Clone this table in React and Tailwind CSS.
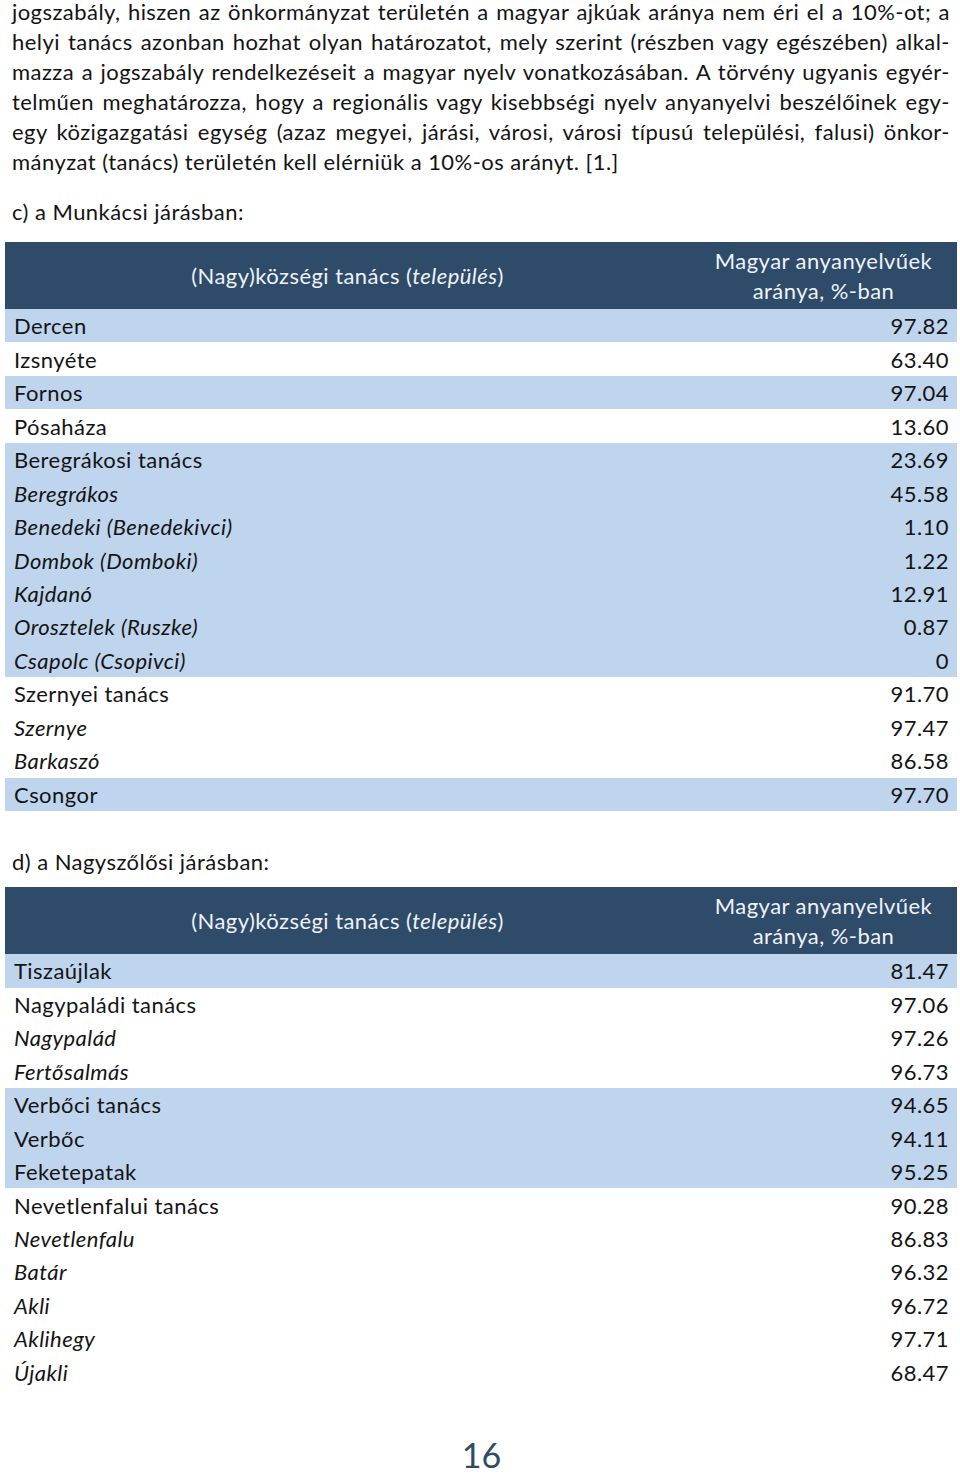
import React from "react";

const para = [
  "jogszabály, hiszen az önkormányzat területén a magyar ajkúak aránya nem éri el a 10%-ot; a",
  "helyi tanács azonban hozhat olyan határozatot, mely szerint (részben vagy egészében) alkal-",
  "mazza a jogszabály rendelkezéseit a magyar nyelv vonatkozásában. A törvény ugyanis egyér-",
  "telműen meghatározza, hogy a regionális vagy kisebbségi nyelv anyanyelvi beszélőinek egy-",
  "egy közigazgatási egység (azaz megyei, járási, városi, városi típusú települési, falusi) önkor-",
];
const lastLine = "mányzat (tanács) területén kell elérniük a 10%-os arányt. [1.]";

const t1 = [
  ["Dercen", "97.82", true, false],
  ["Izsnyéte", "63.40", false, false],
  ["Fornos", "97.04", true, false],
  ["Pósaháza", "13.60", false, false],
  ["Beregrákosi tanács", "23.69", true, false],
  ["Beregrákos", "45.58", true, true],
  ["Benedeki (Benedekivci)", "1.10", true, true],
  ["Dombok (Domboki)", "1.22", true, true],
  ["Kajdanó", "12.91", true, true],
  ["Orosztelek (Ruszke)", "0.87", true, true],
  ["Csapolc (Csopivci)", "0", true, true],
  ["Szernyei tanács", "91.70", false, false],
  ["Szernye", "97.47", false, true],
  ["Barkaszó", "86.58", false, true],
  ["Csongor", "97.70", true, false],
];

const t2 = [
  ["Tiszaújlak", "81.47", true, false],
  ["Nagypaládi tanács", "97.06", false, false],
  ["Nagypalád", "97.26", false, true],
  ["Fertősalmás", "96.73", false, true],
  ["Verbőci tanács", "94.65", true, false],
  ["Verbőc", "94.11", true, false],
  ["Feketepatak", "95.25", true, false],
  ["Nevetlenfalui tanács", "90.28", false, false],
  ["Nevetlenfalu", "86.83", false, true],
  ["Batár", "96.32", false, true],
  ["Akli", "96.72", false, true],
  ["Aklihegy", "97.71", false, true],
  ["Újakli", "68.47", false, true],
];

function Table({ rows }) {
  return (
    <div className="mx-[5px] w-[952px]">
      <div className="grid grid-cols-[685px_1fr] h-[67px] bg-[#2e4b69] text-[#eef2f7]">
        <div className="flex items-center justify-center leading-[30px]">
          <span>
            (Nagy)községi tanács (<span className="italic">település</span>)
          </span>
        </div>
        <div className="flex flex-col items-center justify-center leading-[30px] text-center">
          <span>Magyar anyanyelvűek</span>
          <span>aránya, %-ban</span>
        </div>
      </div>
      {rows.map(([name, val, blue, it]) => (
        <div
          key={name}
          className={
            "flex h-[33.47px] items-center justify-between pl-[9px] pr-[8px] " +
            (blue ? "bg-[#bfd5ee]" : "bg-white")
          }
        >
          <span className={it ? "italic" : ""}>{name}</span>
          <span>{val}</span>
        </div>
      ))}
    </div>
  );
}

export default function App() {
  return (
    <div
      className="w-[960px] h-[1475px] bg-white text-[#141414] text-[22px] tracking-[0.45px] overflow-hidden"
      style={{ fontFamily: "Lato, 'Liberation Sans', sans-serif" }}
    >
      <div className="pl-[12px] pr-[10px] leading-[30px]">
        {para.map((l, i) => (
          <div
            key={l}
            className={
              "text-justify [text-align-last:justify] " +
              (i === 0 ? "leading-[24px] mb-[3px]" : "")
            }
          >
            {l}
          </div>
        ))}
        <div>{lastLine}</div>
      </div>
      <div className="mt-[20px] pl-[12px] leading-[30px]">c) a Munkácsi járásban:</div>
      <div className="mt-[15px]">
        <Table rows={t1} />
      </div>
      <div className="mt-[36px] pl-[12px] leading-[30px]">d) a Nagyszőlősi járásban:</div>
      <div className="mt-[10px]">
        <Table rows={t2} />
      </div>
      <div className="mt-[49px] text-center text-[34px] leading-[34px] tracking-normal text-[#2e4b69] pl-[3px]">16</div>
    </div>
  );
}
